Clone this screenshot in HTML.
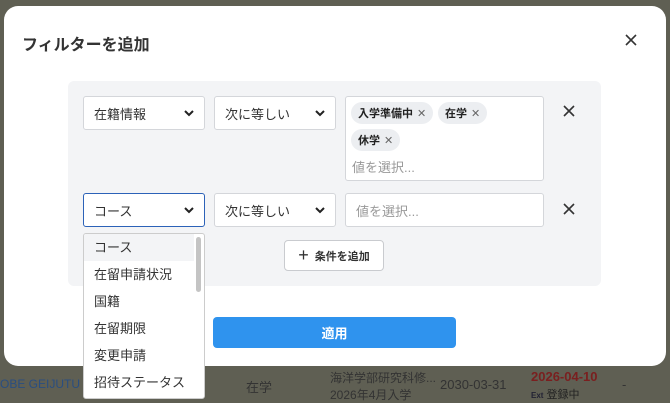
<!DOCTYPE html>
<html><head><meta charset="utf-8"><style>
*{box-sizing:border-box;margin:0;padding:0}
body{width:670px;height:401px;overflow:hidden;background:#5f5f53;font-family:"Liberation Sans","Noto Sans CJK JP",sans-serif;position:relative;color:#222}
.abs{position:absolute}
.modal{left:4px;top:6px;width:662px;height:360px;background:#fff;border-radius:14px}
.panel{left:68px;top:81px;width:533px;height:205px;background:#f3f4f6;border-radius:6px}
.sel{background:#fff;border:1px solid #d4d6da;border-radius:3px;height:34px;font-size:13px;color:#333;padding:0 10px;display:flex;align-items:center}
.sel svg{position:absolute;right:10px;top:13px}
.chip{background:#eceef1;border-radius:11px;height:22px;font-size:11px;font-weight:bold;padding:0 7px;display:flex;align-items:center;gap:4px;color:#222}
.chip span{font-weight:normal;color:#666;font-size:11px}
.ph{font-size:13px;color:#999}
.dd{left:83px;top:233px;width:122px;height:166px;background:#fff;border:1px solid #ccc;border-radius:3px;overflow:hidden}
.dd div{height:27px;line-height:27px;padding-left:10px;font-size:13px;color:#333}
.bt{font-size:13px;color:#333}
</style></head><body>
<div class="abs" style="left:0;top:377px;font-size:12px;color:#2a4e80">OBE GEIJUTU</div>
<div class="abs bt" style="left:246px;top:377px">在学</div>
<div class="abs bt" style="left:330px;top:369px;font-size:12px">海洋学部研究科修...</div>
<div class="abs bt" style="left:330px;top:386px;font-size:12px">2026年4月入学</div>
<div class="abs bt" style="left:440px;top:377px">2030-03-31</div>
<div class="abs" style="left:531px;top:369px;font-size:13px;color:#7a1f1f;font-weight:bold">2026-04-10</div>
<div class="abs" style="left:531px;top:386px;font-size:11px;color:#222"><b style="font-size:8px;color:#223">Ext</b> 登録中</div>
<div class="abs bt" style="left:622px;top:377px">-</div>

<div class="abs modal"></div>
<div class="abs" style="left:22px;top:31px;font-size:16px;font-weight:bold;color:#333">フィルターを追加</div>
<svg class="abs" style="left:625px;top:34px" width="12" height="12" viewBox="0 0 12 12"><path d="M1 1l10 10M11 1L1 11" stroke="#333" stroke-width="1.6"/></svg>
<div class="abs panel"></div>

<div class="abs sel" style="left:83px;top:96px;width:122px">在籍情報<svg width="10" height="7" viewBox="0 0 10 7"><path d="M1 1l4 4 4-4" stroke="#222" stroke-width="2" fill="none"/></svg></div>
<div class="abs sel" style="left:214px;top:96px;width:122px">次に等しい<svg width="10" height="7" viewBox="0 0 10 7"><path d="M1 1l4 4 4-4" stroke="#222" stroke-width="2" fill="none"/></svg></div>
<div class="abs" style="left:345px;top:96px;width:199px;height:85px;background:#fff;border:1px solid #d4d6da;border-radius:3px"></div>
<div class="abs chip" style="left:351px;top:102px">入学準備中<span>✕</span></div>
<div class="abs chip" style="left:438px;top:102px">在学<span>✕</span></div>
<div class="abs chip" style="left:351px;top:129px">休学<span>✕</span></div>
<div class="abs ph" style="left:352px;top:157px">値を選択...</div>
<svg class="abs" style="left:563px;top:105px" width="12" height="12" viewBox="0 0 12 12"><path d="M1 1l10 10M11 1L1 11" stroke="#333" stroke-width="1.6"/></svg>

<div class="abs sel" style="left:83px;top:193px;width:122px;border:1.5px solid #2c62b8">コース<svg width="10" height="7" viewBox="0 0 10 7"><path d="M1 1l4 4 4-4" stroke="#222" stroke-width="2" fill="none"/></svg></div>
<div class="abs sel" style="left:214px;top:193px;width:122px">次に等しい<svg width="10" height="7" viewBox="0 0 10 7"><path d="M1 1l4 4 4-4" stroke="#222" stroke-width="2" fill="none"/></svg></div>
<div class="abs sel" style="left:345px;top:193px;width:199px"><span class="ph">値を選択...</span></div>
<svg class="abs" style="left:563px;top:203px" width="12" height="12" viewBox="0 0 12 12"><path d="M1 1l10 10M11 1L1 11" stroke="#333" stroke-width="1.6"/></svg>

<div class="abs" style="left:284px;top:240px;width:100px;height:31px;background:#fff;border:1px solid #c9cbcf;border-radius:4px;display:flex;align-items:center;justify-content:center;font-size:11px;font-weight:bold;color:#333"><span style="font-size:18px;font-weight:normal;margin-right:6px">+</span>条件を追加</div>

<div class="abs" style="left:213px;top:317px;width:243px;height:31px;background:#2f93ee;border-radius:4px;color:#fff;font-size:13px;font-weight:bold;display:flex;align-items:center;justify-content:center">適用</div>

<div class="abs dd">
<div style="background:#f3f4f6;margin-right:10px">コース</div>
<div>在留申請状況</div>
<div>国籍</div>
<div>在留期限</div>
<div>変更申請</div>
<div>招待ステータス</div>
</div>
<div class="abs" style="left:196px;top:237px;width:5px;height:55px;background:#c4c4c4;border-radius:3px"></div>
</body></html>
